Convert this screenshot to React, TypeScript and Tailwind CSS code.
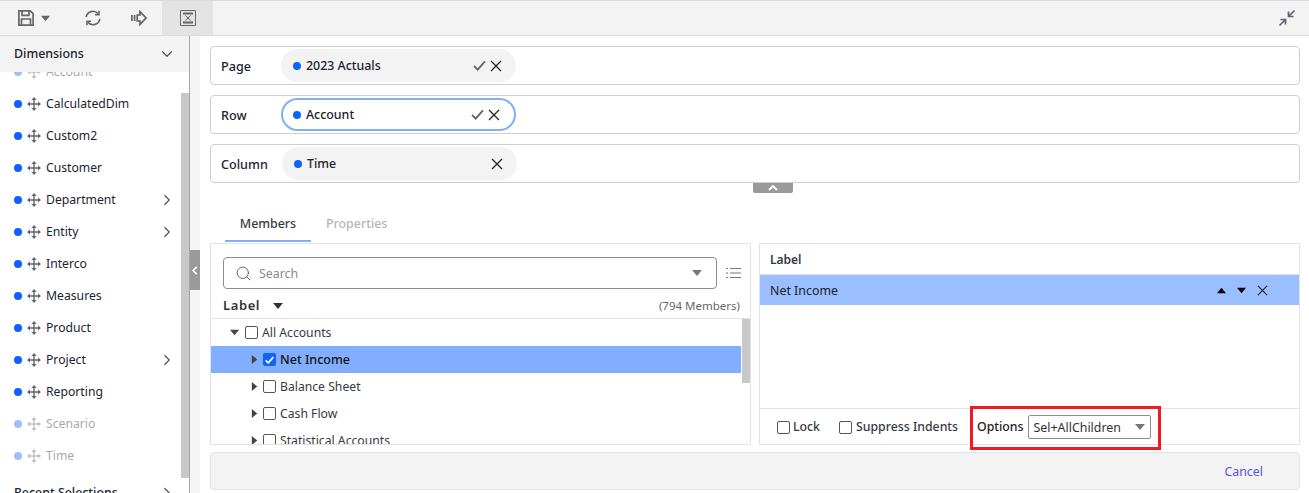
import { ChevronDown, ChevronRight, Search } from "lucide-react";

type Dim = { name: string; faded?: boolean; more?: boolean };

const dims: Dim[] = [
  { name: "Account", faded: true },
  { name: "CalculatedDim" },
  { name: "Custom2" },
  { name: "Customer" },
  { name: "Department", more: true },
  { name: "Entity", more: true },
  { name: "Interco" },
  { name: "Measures" },
  { name: "Product" },
  { name: "Project", more: true },
  { name: "Reporting" },
  { name: "Scenario", faded: true },
  { name: "Time", faded: true },
];

function Caret({ dir, className }: { dir: "down" | "right" | "up"; className?: string }) {
  const points = dir === "down" ? "0,2 10,2 5,8" : dir === "up" ? "0,8 10,8 5,2" : "2,0 8,5 2,10";
  return (
    <svg viewBox="0 0 10 10" className={className} fill="currentColor">
      <polygon points={points} />
    </svg>
  );
}

function Cross({ className }: { className?: string }) {
  return (
    <svg viewBox="0 0 12 12" className={className} fill="none" stroke="currentColor" strokeWidth="1.3">
      <path d="M1 1l10 10M11 1L1 11" />
    </svg>
  );
}

function Tick({ className, width = 2 }: { className?: string; width?: number }) {
  return (
    <svg viewBox="0 0 14 12" className={className} fill="none" stroke="currentColor" strokeWidth={width}>
      <path d="M1 6.5l4 4L13 1.5" />
    </svg>
  );
}

function MoveIcon() {
  return (
    <svg viewBox="0 0 14 14" className="ml-[5px] h-[14px] w-[14px] shrink-0 text-[#666]" fill="currentColor">
      <path d="M6.3 2.5h1.4v9H6.3zM2.5 6.3h9v1.4h-9z" />
      <path d="M7 0l2.6 3H4.4zM7 14l-2.6-3h5.2zM0 7l3-2.6v5.2zM14 7l-3 2.6V4.4z" />
    </svg>
  );
}

function Toolbar() {
  return (
    <div className="flex h-9 shrink-0 items-stretch border-y border-[#dcdcdc] bg-[#f3f3f3] text-[#666]">
      <div className="flex items-center pl-[18px]">
        <svg viewBox="0 0 16 16" className="h-4 w-4" fill="none" stroke="currentColor" strokeWidth="1.7">
          <path d="M.9.9h11.4l2.8 2.8v11.4H.9z" />
          <path d="M4 1v4.3h7V1M3.5 15V9h9v6" />
        </svg>
        <Caret dir="down" className="ml-[7px] h-[9px] w-[9px]" />
      </div>
      <div className="ml-[35px] flex items-center">
        <svg viewBox="0 0 16 16" className="h-4 w-4" fill="none" stroke="currentColor" strokeWidth="1.6">
          <path d="M1.2 7.2A6.8 6.8 0 0 1 13 3.6M14.8 8.8A6.8 6.8 0 0 1 3 12.4" />
          <path d="M14 .8v4h-4M2 15.2v-4h4" />
        </svg>
      </div>
      <div className="ml-[30px] flex items-center">
        <svg viewBox="0 0 16 16" className="h-4 w-4" fill="none" stroke="currentColor" strokeWidth="1.7">
          <path d="M.9 5v6M3.6 5v6M6.2 5H9V1.6L15 8l-6 6.4V11H6.2z" />
        </svg>
      </div>
      <div className="ml-[15px] flex w-[51px] items-center justify-center bg-[#e3e3e3]">
        <svg viewBox="0 0 16 16" className="h-4 w-4" fill="none" stroke="currentColor">
          <path d="M.5.5h15v15H.5z" />
          <path strokeWidth="2" d="M3 3.5h10M3 12.5h10" />
          <path d="M5.5 5.5l5 5M10.5 5.5l-5 5" />
        </svg>
      </div>
      <div className="ml-auto mr-[13px] flex items-center">
        <svg viewBox="0 0 18 18" className="h-[18px] w-[18px] text-[#5f6470]" fill="none" stroke="currentColor" strokeWidth="1.7">
          <path d="M16.5 1.5L10.5 7.5M10.5 2.5V7.5H15.5M1.5 16.5L7.5 10.5M2.5 10.5H7.5V15.5" />
        </svg>
      </div>
    </div>
  );
}

function Sidebar() {
  return (
    <div className="relative flex w-[190px] shrink-0 flex-col overflow-hidden border-r border-[#a6a6a6]">
      <div className="relative z-10 flex h-9 shrink-0 items-center justify-between bg-[#f3f3f3] pl-[14px] pr-[13px] text-[12.4px] font-medium text-[#1c2430]">
        <span>Dimensions</span>
        <ChevronDown className="h-[18px] w-[18px] text-[#555]" strokeWidth={1.6} />
      </div>
      <div className="-mt-[16px] flex-1">
        {dims.map((d) => (
          <div key={d.name} className={`flex h-8 items-center pl-[14px] pr-[13px] text-[12.2px] ${d.faded ? "opacity-40" : ""}`}>
            <span className="h-2 w-2 shrink-0 rounded-full bg-[#0f62fe]" />
            <MoveIcon />
            <span className="ml-[5px] flex-1 text-[#1c2430]">{d.name}</span>
            {d.more && <ChevronRight className="h-[18px] w-[18px] text-[#555]" strokeWidth={1.6} />}
          </div>
        ))}
        <div className="mt-[5px] flex h-8 items-center pl-[14px] pr-[13px] text-[12.4px] font-medium text-[#1c2430]">
          <span className="flex-1">Recent Selections</span>
          <ChevronRight className="h-[18px] w-[18px] text-[#555]" strokeWidth={1.6} />
        </div>
      </div>
      <div className="absolute right-0 top-[57px] h-[385px] w-2 bg-[#c8c8c8]" />
    </div>
  );
}

function Pill({ label, name, focused, check = true, shift }: { label: string; name: string; focused?: boolean; check?: boolean; shift?: boolean }) {
  return (
    <div className="flex h-[39px] items-center rounded-[4px] border border-[#cfcfcf] bg-white pl-[10px]">
      <span className="w-[60px] pt-[4px] text-[12.6px] font-medium text-[#1c2430]">{label}</span>
      <div
        className={`flex h-[33px] w-[235px] items-center rounded-full pr-[14px] text-[12.4px] text-[#1c2430] ${
          focused ? "border-2 border-[#82aefc] bg-white pl-[10px]" : "bg-[#f3f3f3] pl-[12px]"
        } ${shift ? "ml-px" : ""}`}
      >
        <span className="h-2 w-2 rounded-full bg-[#0f62fe]" />
        <span className="ml-[5px] flex-1 pt-[2px] font-medium">{name}</span>
        {check && <Tick className="h-[11px] w-[13px] text-[#666]" />}
        <Cross className="ml-[4px] h-3 w-3 text-[#222]" />
      </div>
    </div>
  );
}

function Box({ checked }: { checked?: boolean }) {
  if (checked) {
    return (
      <span className="flex h-[13px] w-[13px] items-center justify-center rounded-[2px] bg-[#0f62fe]">
        <Tick className="h-[8px] w-[9px] text-white" width={2.6} />
      </span>
    );
  }
  return <span className="h-[13px] w-[13px] rounded-[2px] border border-[#555] bg-white" />;
}

function TreeRow({ label, depth, open, checked, selected }: { label: string; depth: number; open?: boolean; checked?: boolean; selected?: boolean }) {
  return (
    <div className={`flex h-[27px] shrink-0 items-center ${selected ? "bg-[#82aeff] text-[12.5px] font-medium text-[#111]" : "text-[12.2px] text-[#333a45]"} ${depth ? "pl-[39px]" : "pl-[19px]"}`}>
      <Caret dir={open ? "down" : "right"} className="h-[9px] w-[9px] text-[#444]" />
      <span className={`flex ${depth ? "ml-[4px]" : "ml-[6px]"}`}>
        <Box checked={checked} />
      </span>
      <span className="ml-[4px] pt-[2px]">{label}</span>
    </div>
  );
}

function MembersPanel() {
  return (
    <div className="flex w-[541px] flex-col overflow-hidden border border-[#e3e3e3] bg-white">
      <div className="flex items-center pl-3 pr-[9px] pt-[13px]">
        <div className="flex h-8 flex-1 items-center rounded-[4px] border border-[#8c8c8c] pl-[11px] pr-[14px]">
          <Search className="h-[17px] w-[17px] text-[#666]" strokeWidth={1.4} />
          <span className="ml-[7px] flex-1 pt-[2px] text-[12.4px] text-[#8a8a8a]">Search</span>
          <Caret dir="down" className="h-[10px] w-[10px] text-[#777]" />
        </div>
        <svg viewBox="0 0 15 12" className="ml-[9px] h-3 w-[15px] text-[#777]" stroke="currentColor" strokeWidth="1.2">
          <path d="M0 1.5h2M4 1.5h11M0 6h2M4 6h11M0 10.5h2M4 10.5h11" />
        </svg>
      </div>
      <div className="flex h-[30px] shrink-0 items-center justify-between border-b border-[#e3e3e3] pl-3 pr-[10px] pt-[4px]">
        <div className="flex items-center text-[13px] font-semibold tracking-[0.6px] text-[#333]">
          Label
          <Caret dir="down" className="ml-[13px] h-[10px] w-[10px] text-[#333]" />
        </div>
        <span className="text-[11.5px] text-[#666]">(794 Members)</span>
      </div>
      <div className="flex min-h-0 flex-1">
        <div className="flex min-w-0 flex-1 flex-col overflow-hidden">
          <TreeRow label="All Accounts" depth={0} open />
          <TreeRow label="Net Income" depth={1} checked selected />
          <TreeRow label="Balance Sheet" depth={1} />
          <TreeRow label="Cash Flow" depth={1} />
          <TreeRow label="Statistical Accounts" depth={1} />
        </div>
        <div className="ml-px w-2 shrink-0">
          <div className="h-[64px] bg-[#c8c8c8]" />
        </div>
      </div>
    </div>
  );
}

function SelectionPanel() {
  return (
    <div className="relative flex w-[541px] flex-col border border-[#e3e3e3] bg-white">
      <div className="flex h-[31px] shrink-0 items-center border-b border-[#e3e3e3] pl-[10px] pt-[2px] text-[12px] font-semibold text-[#333a45]">Label</div>
      <div className="flex h-[30px] shrink-0 items-center bg-[#9abeff] pl-[10px] pr-[31px] text-[12.4px] text-[#222]">
        <span className="flex-1 pt-[2px]">Net Income</span>
        <Caret dir="up" className="h-[9px] w-[9px] text-black" />
        <Caret dir="down" className="ml-[11px] h-[9px] w-[9px] text-black" />
        <Cross className="ml-[11px] h-[11px] w-[11px] text-[#222]" />
      </div>
      <div className="flex-1" />
      <div className="flex h-[36px] shrink-0 items-center border-t border-[#e3e3e3] pl-[17px] pt-[1px] text-[12.3px] font-medium text-[#333a45]">
        <Box />
        <span className="ml-[3px]">Lock</span>
        <span className="ml-[19px] flex"><Box /></span>
        <span className="ml-[4px]">Suppress Indents</span>
        <span className="ml-[19px] pt-[1px] text-[#222]">Options</span>
        <div className="ml-[4px] flex h-6 w-[123px] items-center rounded-[2px] border border-[#8c8c8c] pl-[5px] pr-[5px] font-normal text-[#333]">
          <span className="flex-1 pt-[2px] text-[12.4px]">Sel+AllChildren</span>
          <Caret dir="down" className="h-[10px] w-[10px] text-[#777]" />
        </div>
      </div>
      <div className="absolute bottom-[-6px] left-[210px] h-[44px] w-[191px] border-[3px] border-[#ed1c24]" />
    </div>
  );
}

export default function App() {
  return (
    <div className="flex h-[493px] w-[1309px] flex-col overflow-hidden bg-white font-['Noto_Sans','Open_Sans',sans-serif]">
      <Toolbar />
      <div className="flex min-h-0 flex-1">
        <Sidebar />
        <div className="w-[10px] shrink-0 bg-[#f5f5f5] pt-[214px]">
          <div className="flex h-10 w-[10px] items-center justify-center bg-[#9a9a9a] text-white">
            <svg viewBox="0 0 6 10" className="h-[9px] w-[6px]" fill="none" stroke="currentColor" strokeWidth="1.8">
              <path d="M5 1L1 5l4 4" />
            </svg>
          </div>
        </div>
        <div className="flex min-w-0 flex-1 flex-col pl-[10px] pr-[9px] pt-[10px]">
          <div className="flex flex-col gap-[10px]">
            <Pill label="Page" name="2023 Actuals" />
            <Pill label="Row" name="Account" focused />
            <Pill label="Column" name="Time" check={false} shift />
          </div>
          <div className="ml-[543px] flex h-[10px] w-10 items-center justify-center rounded-b-[2px] bg-[#9a9a9a] text-white">
            <svg viewBox="0 0 10 6" className="h-[6px] w-[10px]" fill="none" stroke="currentColor" strokeWidth="1.8">
              <path d="M1 5l4-4 4 4" />
            </svg>
          </div>
          <div className="mt-[16px] flex h-[32px] items-start pl-[15px] text-[12.4px]">
            <div className="flex h-[33px] w-[86px] items-start justify-center border-b-[2px] border-[#82aefc] pt-[6px] font-medium text-[#333a45]">Members</div>
            <div className="ml-[15px] pt-[6px] font-medium text-[#b5b5b5]">Properties</div>
          </div>
          <div className="mt-[2px] flex h-[202px] justify-between">
            <MembersPanel />
            <SelectionPanel />
          </div>
          <div className="mt-[7px] flex h-[38px] items-center justify-end rounded-[4px] border border-[#e3e3e3] bg-[#f3f3f3] pr-[36px] pt-[3px] text-[12.4px] text-[#5a55d6]">
            Cancel
          </div>
        </div>
      </div>
    </div>
  );
}
